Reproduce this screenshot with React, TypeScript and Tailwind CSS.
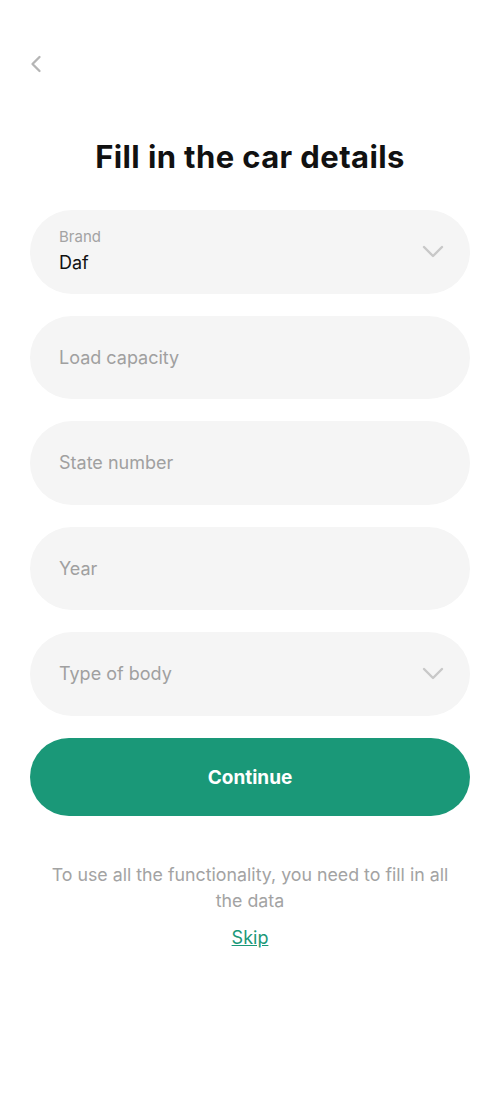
import React from 'react';
import { ChevronLeft } from 'lucide-react';

const Chevron = () => (
  <svg width="22" height="13" viewBox="0 0 22 13" fill="none" className="text-[#c8c8c8]">
    <path d="M2 2 L11 11 L20 2" stroke="currentColor" strokeWidth="2.4" strokeLinecap="round" strokeLinejoin="round" />
  </svg>
);

const Field: React.FC<{ label: string; value?: string; select?: boolean }> = ({ label, value, select }) => (
  <div className="h-[83.5px] w-full rounded-full bg-[#f5f5f5] flex items-center pl-[29px] pr-[26px]">
    <div className="flex-1">
      {value ? (
        <>
          <div className="text-[15px] leading-[18px] text-[#a3a3a3]">{label}</div>
          <div className="text-[18px] leading-[26px] text-[#111] mt-[4px]">{value}</div>
        </>
      ) : (
        <div className="text-[18px] text-[#a0a0a0]">{label}</div>
      )}
    </div>
    {select && <Chevron />}
  </div>
);

export default function App() {
  return (
    <div className="w-[500px] min-h-[1100px] bg-white font-['Inter',sans-serif] px-[30px]">
      <div className="pt-[50px]">
        <ChevronLeft className="w-[28px] h-[28px] text-[#b5b5b5] -ml-[8px]" strokeWidth={2} />
      </div>
      <h1 className="mt-[59px] text-center text-[31px] font-bold text-[#111] leading-[40px] tracking-[0.4px]">Fill in the car details</h1>
      <div className="mt-[33px] flex flex-col gap-[22px]">
        <Field label="Brand" value="Daf" select />
        <Field label="Load capacity" />
        <Field label="State number" />
        <Field label="Year" />
        <Field label="Type of body" select />
      </div>
      <button className="mt-[22px] w-full h-[78px] rounded-full bg-[#1a9878] text-white text-[19px] font-bold pt-[3px]">Continue</button>
      <p className="mt-[46px] text-center text-[17.8px] leading-[26px] text-[#a3a3a3] px-[12px]">
        To use all the functionality, you need to fill in all the data
      </p>
      <div className="mt-[10px] text-center">
        <a className="text-[18px] text-[#1a9878] underline">Skip</a>
      </div>
    </div>
  );
}
